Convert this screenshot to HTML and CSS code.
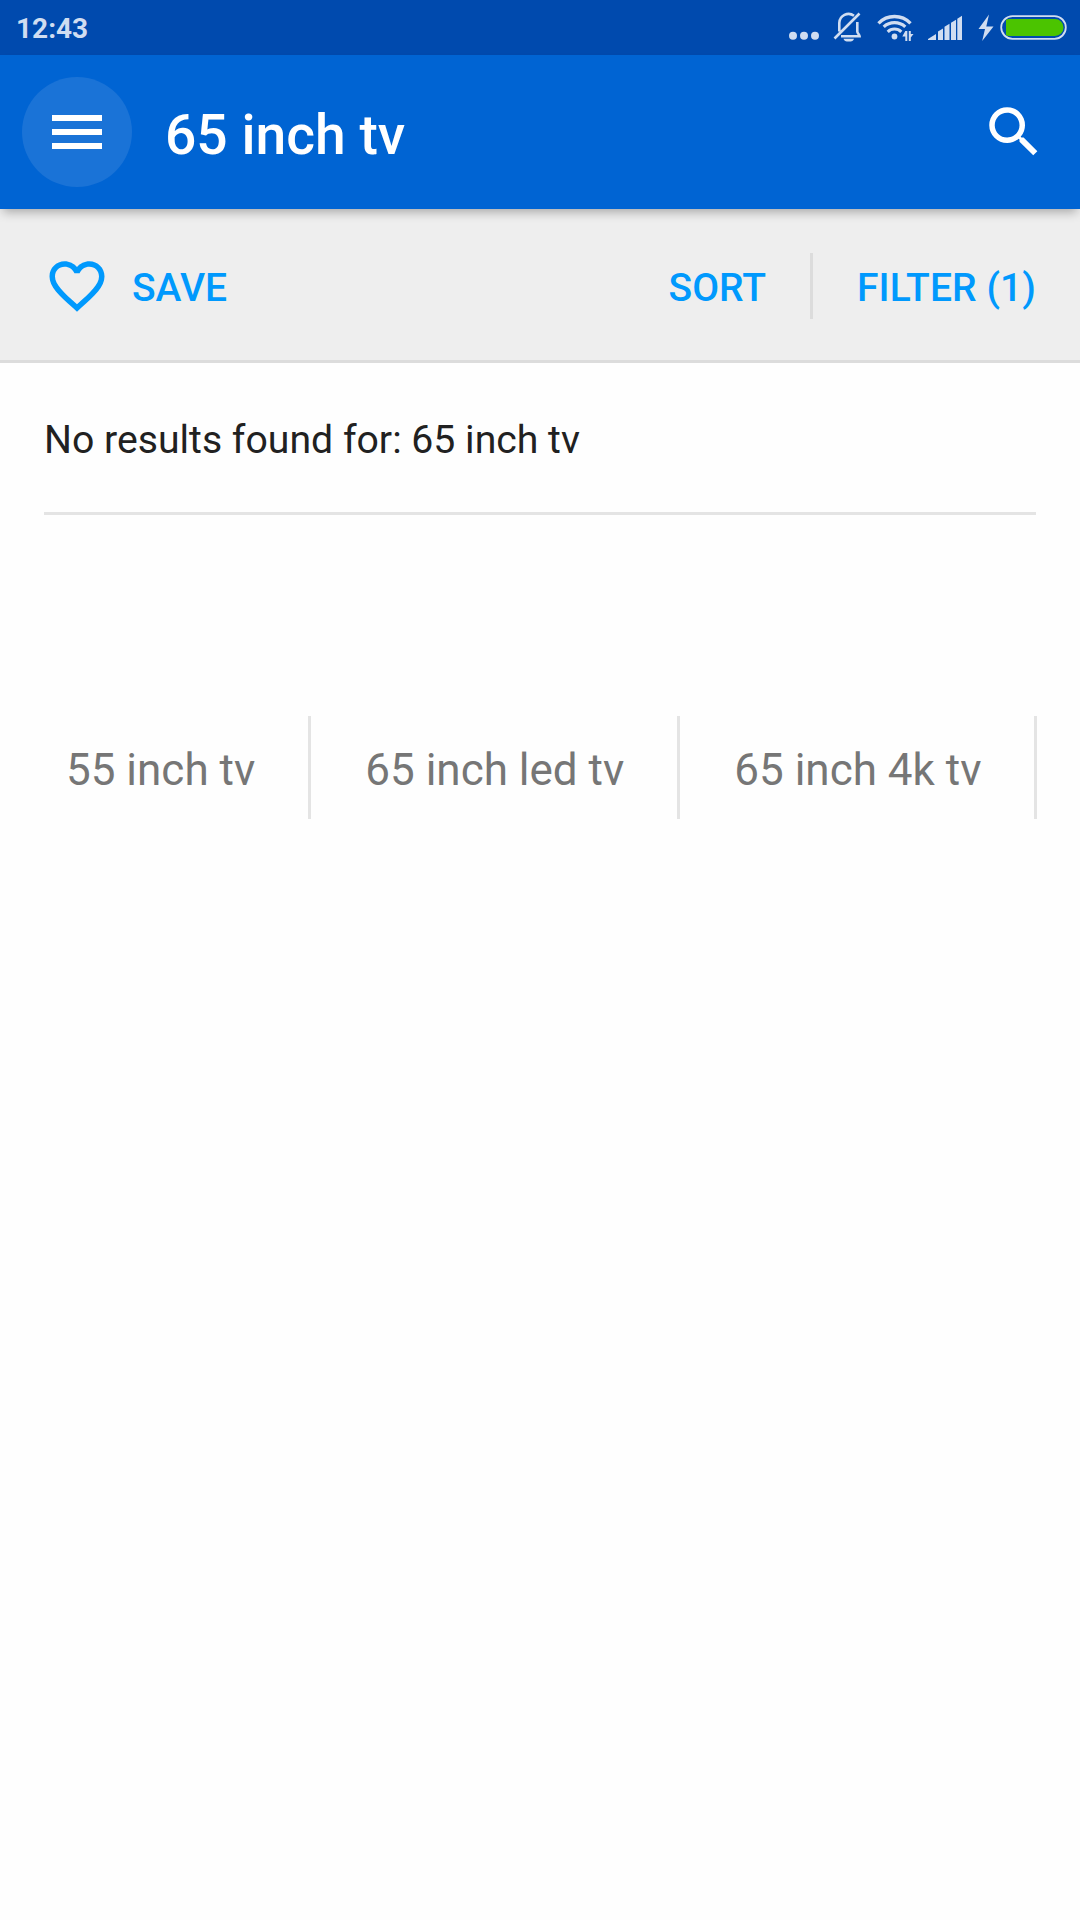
FILE: index.html
```html
<!DOCTYPE html>
<html lang="en">
<head>
<meta charset="utf-8">
<title>65 inch tv</title>
<link rel="stylesheet" href="styles.css">
</head>
<body>
<div class="status-bar">
  <span class="clock">12:43</span>
  <svg class="status-icons" width="290" height="55" viewBox="780 0 290 55" aria-hidden="true">
    <g fill="currentColor">
      <circle cx="793" cy="35.7" r="4"/><circle cx="804" cy="35.7" r="4"/><circle cx="815" cy="35.7" r="4"/>
      <path d="M843.500 38.700h10.500a5.300 3.300 0 0 1-10.500 0z"/>
      <circle cx="894.500" cy="36.500" r="2.900"/>
      <path d="M905.300 31h2v10h-2v-4.500h-3zM908.800 31h2v3h2.700l-2.700 3.500v3.500h-2z"/>
      <path d="M928 40v-1l8-5V40zM938 31.500l5-3V40h-5zM944.500 26.700l5-3V40h-5zM951 22.700l5-3V40h-5zM957.300 18.700l4.700-3V40h-4.700z"/>
      <path d="M989 14.500 978.500 29h6.500l-2.800 12L993.500 26.500h-7.200z"/>
    </g>
    <g fill="none" stroke="currentColor">
      <path stroke-width="2.600" d="M839.300 31.500V23a9.300 9.300 0 0 1 14.700-7.300M857.300 22v9.500c0 2 2.300 3 2.300 4.800H841M834.500 38.500 859.500 13.500"/>
      <path stroke-width="3.300" d="M878.500 23.400a22 22 0 0 1 32 0M883.700 26.900a16 16 0 0 1 21.600 0"/>
      <path stroke-width="3" d="M887.700 31.900a9.500 9.500 0 0 1 13.600 0"/>
      <rect x="1001.200" y="16.200" width="64.600" height="22.600" rx="11.300" stroke-width="1.800"/>
    </g>
    <path fill="#4bc400" d="M1006 20a5 5 0 0 1 3-1h46a8.500 8.500 0 0 1 0 17h-46a5 5 0 0 1-3-1z"/>
  </svg>
</div>
<header class="app-bar">
  <button class="menu" aria-label="Menu"><i class="line"></i><i class="line"></i><i class="line"></i></button>
  <h1 class="title">65 inch tv</h1>
  <svg class="search" width="66" height="66" viewBox="0 0 24 24" aria-hidden="true"><path fill="currentColor" d="M15.500 14h-.79l-.28-.27A6.471 6.471 0 0 0 16 9.500 6.500 6.500 0 1 0 9.500 16c1.610 0 3.090-.590 4.230-1.570l.27.28v.79l5 4.990L20.490 19l-4.990-5zm-6 0C7.010 14 5 11.990 5 9.500S7.010 5 9.500 5 14 7.010 14 9.500 11.990 14 9.500 14z"/></svg>
</header>
<nav class="toolbar">
  <svg class="heart" width="66" height="66" viewBox="0 0 24 24" aria-hidden="true"><path fill="currentColor" d="M16.500 3c-1.740 0-3.410.81-4.500 2.090C10.910 3.810 9.240 3 7.500 3 4.420 3 2 5.420 2 8.500c0 3.780 3.400 6.860 8.550 11.540L12 21.350l1.450-1.320C18.600 15.360 22 12.280 22 8.500 22 5.420 19.580 3 16.500 3zm-4.400 15.550l-.1.100-.1-.1C7.140 14.240 4 11.390 4 8.500 4 6.500 5.500 5 7.500 5c1.540 0 3.040.99 3.570 2.360h1.870C13.460 5.990 14.960 5 16.500 5c2 0 3.500 1.500 3.500 3.500 0 2.890-3.140 5.740-7.900 10.050z"/></svg>
  <span class="save">SAVE</span>
  <span class="sort">SORT</span>
  <span class="filter">FILTER (1)</span>
</nav>
<main class="content">
  <p class="message">No results found for: 65 inch tv</p>
  <ul class="suggestions">
    <li class="suggestion">55 inch tv</li>
    <li class="suggestion">65 inch led tv</li>
    <li class="suggestion">65 inch 4k tv</li>
  </ul>
</main>
</body>
</html>
```

FILE: styles.css
```css
* { box-sizing: border-box; }

body {
  margin: 0;
  min-height: 1920px;
  background: #fefefe;
  font-family: Roboto, sans-serif;
  overflow-x: hidden;
}

.status-bar {
  display: flex;
  justify-content: space-between;
  height: 55px;
  padding: 0 10px 0 16px;
  background: #004aae;
  color: #d0ddf1;
}

.clock {
  font-size: 28px;
  font-weight: 700;
  line-height: 57px;
}

.app-bar {
  position: relative;
  display: flex;
  align-items: center;
  height: 154px;
  padding: 0 33px 0 22px;
  background: #0064d3;
  color: #fff;
  box-shadow: 0 6px 10px -3px rgba(0, 0, 0, .3);
}

.menu {
  display: flex;
  flex-direction: column;
  align-items: center;
  justify-content: center;
  gap: 8px;
  width: 110px;
  height: 110px;
  padding: 0;
  border: 0;
  border-radius: 50%;
  background: #1a73d7;
}

.line {
  width: 50px;
  height: 6px;
  background: #fff;
}

.title {
  margin: 5px 0 0 33px;
  font-size: 55.2px;
  font-weight: 500;
  line-height: 64px;
}

.search { margin-left: auto; }

.toolbar {
  display: flex;
  align-items: center;
  height: 154px;
  padding: 2px 44px 0;
  background: #eee;
  border-bottom: 3px solid #dcdcdc;
  color: #0099fd;
  font-size: 39px;
  font-weight: 500;
}

.save,
.sort,
.filter {
  height: 66px;
  padding-top: 2px;
  line-height: 66px;
}

.save { margin-left: 22px; }

.sort {
  margin-left: auto;
  padding-right: 44px;
  border-right: 3px solid #dcdcdc;
}

.filter {
  padding-left: 44px;
  letter-spacing: .08px;
}

.content { padding: 0 44px; }

.message {
  margin: 0;
  padding: 54px 0 48px;
  border-bottom: 3px solid #e4e4e4;
  color: #212121;
  font-size: 39.2px;
  line-height: 47px;
}

.suggestions {
  display: flex;
  width: max-content;
  margin: 201px 0 0;
  padding: 0;
  list-style: none;
  color: #767676;
  font-size: 44px;
}

.suggestion {
  height: 103px;
  padding: 4px 53px 0 54px;
  border-right: 3px solid #e4e4e4;
  line-height: 101px;
}

.suggestion:first-child { padding-left: 22px; }
```
